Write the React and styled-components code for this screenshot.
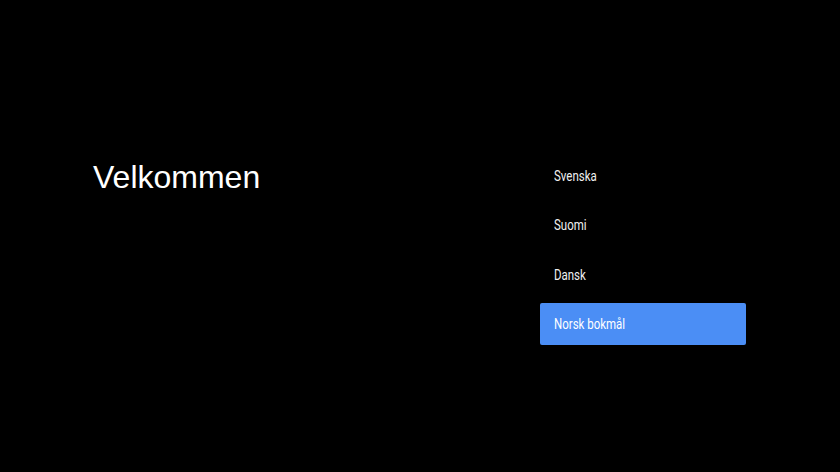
import React from "react";
import styled, { createGlobalStyle } from "styled-components";

const Global = createGlobalStyle`
  html, body { margin: 0; padding: 0; background: #000; }
  body { width: 840px; height: 472px; overflow: hidden; }
`;

const Page = styled.div`
  width: 840px;
  height: 472px;
  background: #000;
  display: flex;
  align-items: flex-start;
  box-sizing: border-box;
  padding: 155px 0 0 93px;
`;

const Intro = styled.div`
  width: 447px;
  padding-top: 6px;
`;

const Title = styled.h1`
  margin: 0;
  font-family: "Liberation Sans", Arial, sans-serif;
  font-weight: 400;
  font-size: 32px;
  line-height: 32px;
  color: #fff;
`;

const List = styled.ul`
  list-style: none;
  margin: 0;
  padding: 0;
  width: 206px;
  display: flex;
  flex-direction: column;
  gap: 7.3px;
`;

const Item = styled.li`
  height: 42px;
  display: flex;
  align-items: center;
  padding-left: 13.5px;
  border-radius: 2px;
  background: ${(p) => (p.$active ? "#4b8ef5" : "transparent")};
  color: ${(p) => (p.$active ? "#fff" : "#f0f0f0")};
  font-family: Roboto, "Noto Sans", sans-serif;
  font-size: 14px;
  font-weight: 400;
`;

const Label = styled.span`
  display: inline-block;
  transform: scaleX(0.82);
  transform-origin: left center;
  white-space: nowrap;
`;

const languages = ["Svenska", "Suomi", "Dansk", "Norsk bokmål"];

export default function App() {
  return (
    <>
      <Global />
      <Page>
        <Intro>
          <Title>Velkommen</Title>
        </Intro>
        <List>
          {languages.map((l, i) => (
            <Item key={l} $active={i === 3}>
              <Label>{l}</Label>
            </Item>
          ))}
        </List>
      </Page>
    </>
  );
}
